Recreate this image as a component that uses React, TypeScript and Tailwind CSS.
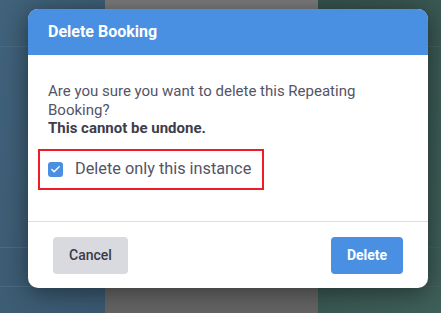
import { Check } from 'lucide-react';

export default function App() {
    return (
        <div className="relative w-[441px] h-[313px] overflow-hidden bg-[#3d5b72] font-['Roboto',sans-serif]">
            {/* Page behind the dialog, dimmed */}
            <div className="flex h-full">
                <div className="w-[105px] flex flex-col bg-gradient-to-br from-[#40627a] to-[#3a586f]">
                    <div className="h-[47px] border-b border-[#4b6b82]"></div>
                    <div className="flex-1"></div>
                    <div className="h-[40px] border-t border-b border-[#4b6b82] mb-[26px]"></div>
                </div>
                <div className="w-[213px] bg-gradient-to-b from-[#7b7b7b] to-[#636363]"></div>
                <div className="flex-1 flex flex-col bg-gradient-to-br from-[#35514d] to-[#3f5f59]">
                    <div className="h-[47px] border-b border-[#46625e]"></div>
                    <div className="flex-1"></div>
                    <div className="h-[40px] border-t border-b border-[#46625e] mb-[26px]"></div>
                </div>
            </div>

            {/* Dialog */}
            <div className="absolute left-[28px] top-[9px] w-[400px] bg-white rounded-[10px] overflow-hidden shadow-[0_4px_24px_rgba(0,0,0,0.45)]">
                <div className="h-[46px] bg-[#4a90e2] px-5 flex items-center">
                    <h2 className="text-white text-[16px] font-bold">Delete Booking</h2>
                </div>

                <div className="px-5 pt-[27px] pb-[31px]">
                    <p className="text-[#545467] text-[15px] leading-[18.5px]">
                        Are you sure you want to delete this Repeating Booking?
                    </p>
                    <p className="text-[#3d3d4c] text-[15px] leading-[18.5px] font-bold">This cannot be undone.</p>

                    <div className="mt-[11px] -ml-[10px] w-[226px] h-[41px] border-2 border-[#ee1c25] flex items-center pl-[8px]">
                        <span className="w-[15px] h-[15px] rounded-[3px] bg-[#4a90e2] flex items-center justify-center">
                            <Check className="w-[11px] h-[11px] text-white" strokeWidth={3} />
                        </span>
                        <span className="ml-[12px] text-[#545467] text-[16.3px]">Delete only this instance</span>
                    </div>
                </div>

                <div className="border-t border-[#dcdce3] px-[25px] pt-[15px] pb-[14px] flex justify-between">
                    <button className="w-[75px] h-[37px] rounded-[4px] bg-[#d9dadf] text-[#3a3a48] text-[14px] font-medium">
                        Cancel
                    </button>
                    <button className="w-[72px] h-[37px] rounded-[4px] bg-[#4a90e2] text-white text-[14px] font-bold">
                        Delete
                    </button>
                </div>
            </div>
        </div>
    );
}
